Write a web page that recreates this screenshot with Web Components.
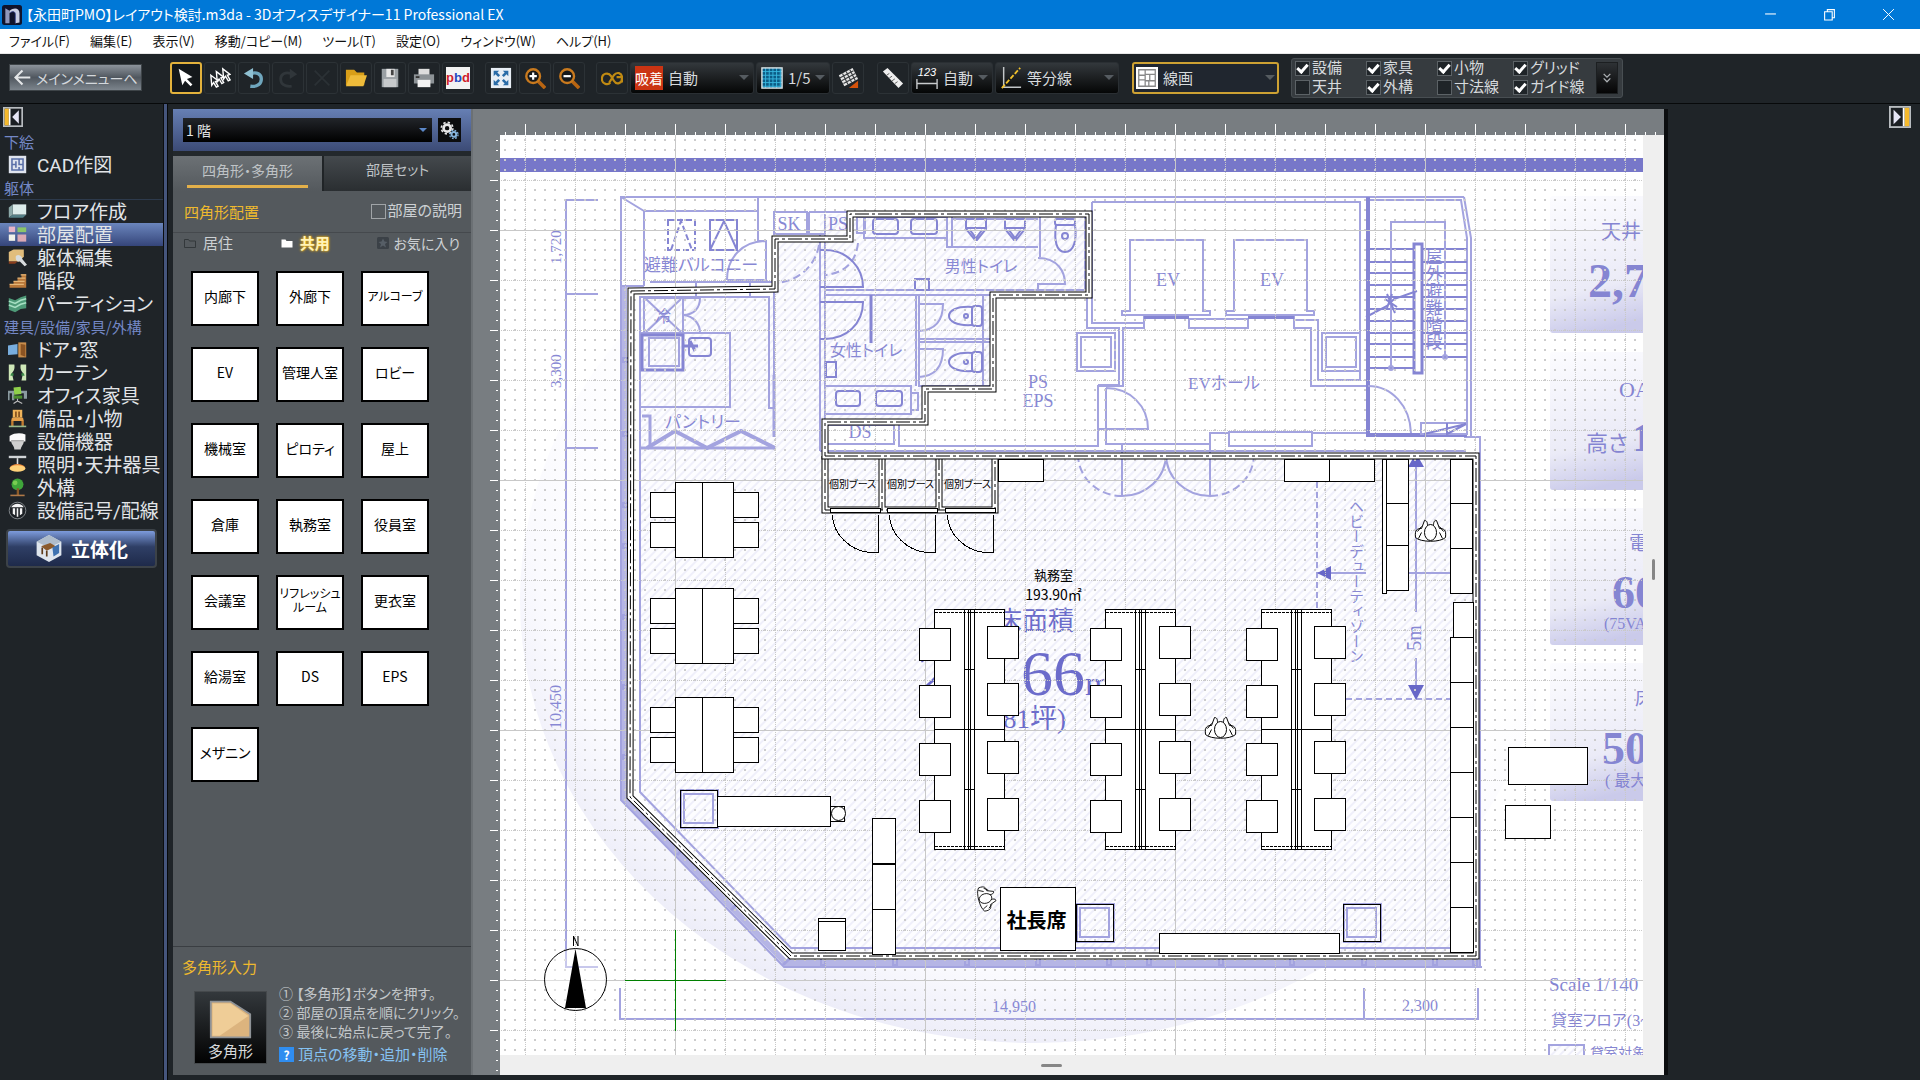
<!DOCTYPE html>
<html lang="ja">
<head>
<meta charset="utf-8">
<title>【永田町PMO】レイアウト検討.m3da - 3Dオフィスデザイナー11 Professional EX</title>
<style>
  html, body {
    margin: 0;
    height: 100%;
    overflow: hidden;
  }

  body {
    background: #1f2428;
    font-family: "Noto Sans CJK JP", sans-serif;
    font-feature-settings: "palt";
    font-size: 15px;
  }
</style>
</head>
<body>
<office-app></office-app>

<script>
const ICONS = {
  logo: `<rect width="24" height="24" rx="3" fill="#10142c"/><path d="M4 22V4l5 3v15z" fill="#8f97bc"/><path d="M9 7c6-5 12-3 12 3v11l-5 1V11c0-4-4-4-7-1z" fill="#c9cee2"/><path d="M10 9c3-2 6-1 6 2v11" fill="none" stroke="#3f4c98"/>`,
  cursor: `<path d="M4 2l15 9-6 2 6 6-2 2-6-6-3 5z" fill="#fff"/>`,
  multi: `<g fill="#1f2428" stroke="#fff" stroke-width="1.5"><path d="M15 2l8 6-3 1 3 5-2 1-3-5-2 3z"/><path d="M8 5l8 6-3 1 3 5-2 1-3-5-2 3z"/><path d="M2 9l8 6-3 1 3 5-2 1-3-5-2 3z"/></g>`,
  undo: `<path d="M8 21c8 1 12-3 12-8S15 5 9 7" fill="none" stroke="#6fa6bd" stroke-width="3.6"/><path d="M1 7l10-6v12z" fill="#8fc0d2"/>`,
  redo: `<path d="M16 21C8 22 4 18 4 13S9 5 15 7" fill="none" stroke="#30363a" stroke-width="3"/><path d="M22 8L14 2v11z" fill="#30363a"/>`,
  cross: `<path d="M4 4l16 16M20 4L4 20" stroke="#2b3135" stroke-width="2"/>`,
  open: `<path d="M1 3h9l3 3h8v14H1z" fill="#d89e18"/><path d="M1 21L6 9h18l-4 12z" fill="#eebb3a"/>`,
  save: `<path d="M3 2h18v20H3z" fill="#9aa0a4"/><path d="M8 2h9v9H8z" fill="#e8e8e8"/><path d="M13 3h3v6h-3z" fill="#444"/><path d="M5 13h14v9H5z" fill="#c6c9cb"/>`,
  print: `<path d="M6 2h12v7H6z" fill="#ddd"/><path d="M1 8h22v10H1z" fill="#8c9296"/><path d="M5 14h14v8H5z" fill="#f2f2f2"/><path d="M3 10h4v2H3z" fill="#333"/>`,
  fit: `<rect x="1" y="1" width="22" height="22" fill="#e8eef5"/><path d="M4 4h6L8 6l3 3-2 2-3-3-2 2zM20 4v6l-2-2-3 3-2-2 3-3-2-2zM4 20v-6l2 2 3-3 2 2-3 3 2 2zM20 20h-6l2-2-3-3 2-2 3 3 2-2z" fill="#2a6ca8"/>`,
  zoomIn: `<path d="M15 15l8 8" stroke="#b86512" stroke-width="4"/><circle cx="10" cy="10" r="7.5" fill="#16181a" stroke="#c97a1e" stroke-width="2.6"/><path d="M6 10h8M10 6v8" stroke="#fff" stroke-width="2.4"/>`,
  zoomOut: `<path d="M15 15l8 8" stroke="#b86512" stroke-width="4"/><circle cx="10" cy="10" r="7.5" fill="#16181a" stroke="#c97a1e" stroke-width="2.6"/><path d="M6 10h8" stroke="#fff" stroke-width="2.4"/>`,
  link: `<path d="M10 17c-2 3-9 2-9-4s7-8 10-3l3 5c3 5 9 3 9-3s-6-7-9-3l-5 8M17 11h6v6" fill="none" stroke="#c08a12" stroke-width="2.4"/>`,
  grid: `<rect x="1" y="1" width="22" height="22" fill="#0b5c86"/><path d="M1 5h22M1 9h22M1 13h22M1 17h22M1 21h22M5 1v22M9 1v22M13 1v22M17 1v22M21 1v22" stroke="#39b8e0"/><rect x="1" y="1" width="22" height="22" fill="none" stroke="#dfe8ea" stroke-width="1.5"/>`,
  tiltGrid: `<path d="M2 9L17 1l6 12-15 8z" fill="#e6e6e6"/><path d="M3 12l15-8M5 15l15-8M7 18l15-8M6 7l6 12M10 5l6 12M14 3l6 12" stroke="#3b3f42" stroke-width="1.3"/><path d="M13 23l10-8v8z" fill="#d5530c"/>`,
  ruler: `<path d="M1 5l5-4 17 17-5 5z" fill="#eee"/><path d="M5 9l3-2M8 12l3-2M11 15l3-2M14 18l3-2" stroke="#555"/>`,
  dims: `<path d="M1 13v11M23 13v11M1 18h22" stroke="#c9ccce" stroke-width="1.5"/><text x="2" y="10" font-family="Liberation Sans" font-style="italic" font-size="12" fill="#fff">123</text>`,
  divide: `<path d="M4 0v22h19" fill="none" stroke="#c2c6c8" stroke-width="1.6"/><path d="M2 23L22 1" stroke="#f1c12c" stroke-width="2" stroke-dasharray="5 2"/>`,
  linePlan: `<rect width="24" height="24" fill="#fff"/><path d="M3 3h18v18H3zM3 9h7V3M10 9v12M10 14h-7M10 8h11M15 8v7h6M15 15h-5M14 15v6" fill="none" stroke="#888" stroke-width="1.4"/>`,
  cad: `<rect x="1" y="1" width="22" height="22" fill="#dfe4ee"/><path d="M5 5h14v14H5zM5 12h5M10 8v8M14 5v7h5M14 15v4" fill="none" stroke="#5a6fa8" stroke-width="2"/>`,
  floor: `<path d="M6 3h17v13H6z" fill="#dcebea"/><path d="M1 7l5-4v13l-5 4z" fill="#8ca8a8"/><path d="M1 20l5-4h17l-4 4z" fill="#557f86"/>`,
  rooms: `<path d="M1 2h8v7H1z" fill="#e7b5c8"/><path d="M12 3h11v6H12z" fill="#8ac56a"/><path d="M1 12h8v8H1z" fill="#f2f2ea"/><path d="M12 12h11v9H12z" fill="#dba8b4"/>`,
  wrench: `<path d="M1 5l6-3h13v9l-6 6H1z" fill="#e1bd7c"/><path d="M1 17h11l-3 3H1z" fill="#8a3d1c"/><path d="M10 10a5 5 0 0 1 8 4l6 7-3 2-6-6c-4 1-6-3-5-7l4 3z" fill="#d8dcde"/>`,
  stairs: `<path d="M2 21v-4h5v-4h5V9h5V4h6v17z" fill="#b9783a"/><path d="M2 17h18M7 13h14M12 9h10M16 5h7" stroke="#e5b677" stroke-width="1.6"/>`,
  partition: `<path d="M1 5l8 3 7-4 7-2v16l-7 1-7 4-8-3z" fill="#4e9a78"/><path d="M1 9l8 3 7-4 7-2M1 14l8 3 7-4 7-2" fill="none" stroke="#a8e0c4" stroke-width="2"/>`,
  door: `<path d="M0 7l12-2v13L0 19z" fill="#79aede"/><path d="M13 3h10v19H13z" fill="#c98e4c"/><path d="M16 5l6 1v15l-6-2z" fill="#8b5423"/>`,
  curtain: `<path d="M1 2h7c1 6-1 8-3 11l2 9H1zM23 2h-7c-1 6 1 8 3 11l-2 9h6z" fill="#cfe8b8"/><path d="M4 13h3v3H3zM17 13h3l1 3h-4z" fill="#3b8a48"/>`,
  office: `<path d="M0 6h8v12H5v-9H2v9H0zM15 6h9v10h-4V9h-5z" fill="#8a9aa0"/><path d="M7 2l9-1 1 9-9 1z" fill="#8fd04a"/><path d="M7 12h11v4H7z" fill="#4d8f2f"/><path d="M12 16v4M7 22l5-3 6 3" stroke="#bbb" stroke-width="1.5" fill="none"/>`,
  chair: `<path d="M6 1h12v10H6z" fill="#f0b45a"/><path d="M9 3h2v7H9zM13 3h2v7h-2z" fill="#7d4a1a"/><path d="M5 11h14l1 4H4z" fill="#e6a04a"/><path d="M4 15h3v7H4zM17 15h3v7h-3z" fill="#c27c30"/><path d="M1 21h22v2H1z" fill="#98b98a"/>`,
  toilet: `<path d="M2 5c6-4 14-4 20-2v9H2z" fill="#fafafa"/><path d="M4 11h16c0 5-3 6-4 11H8c0-5-4-6-4-11z" fill="#cfcfcf"/><path d="M4 11h16" stroke="#888"/>`,
  lamp: `<path d="M1 1h22v3H1z" fill="#d0d4d6"/><path d="M12 4v8" stroke="#ddd" stroke-width="2"/><path d="M2 16c3-6 17-6 20 0z" fill="#ee8a3c"/><ellipse cx="12" cy="17" rx="10" ry="4" fill="#ffd27a"/>`,
  tree: `<circle cx="12" cy="8" r="7.5" fill="#3fa53a"/><circle cx="9" cy="6" r="3" fill="#79cc52"/><path d="M11 13h3v9h-3z" fill="#8a5a2a"/><path d="M3 21h18v2H3z" fill="#b07a48"/>`,
  plug: `<circle cx="12" cy="12" r="10.5" fill="#1c2024" stroke="#9a9ea2"/><path d="M4 8c3-6 13-6 16 0zM6 9h3v9l-3-2zM11 9h2v11h-2zM15 9h3v7l-3 2z" fill="#f4f4f4"/>`,
  cube: `<path d="M12 0l11 6v12l-11 6L1 18V6z" fill="#dfe6ee"/><path d="M12 0l11 6-11 5L1 6z" fill="#aebccb"/><path d="M5 10l8-3 5 3-8 4z" fill="#8b5a2b"/><path d="M6 11v6M10 14v5M17 11v4" stroke="#5f3c1b" stroke-width="1.5"/><path d="M15 11l6-3v8l-5 3z" fill="#3f72b0"/>`,
  gears: `<g fill="none"><circle cx="9" cy="9" r="4.5" stroke="#e8e8e8" stroke-width="3.4"/><circle cx="9" cy="9" r="7.3" stroke="#e8e8e8" stroke-width="2" stroke-dasharray="3 2.7"/><circle cx="17.5" cy="17" r="3" stroke="#86b4dc" stroke-width="2.6"/><circle cx="17.5" cy="17" r="5.3" stroke="#86b4dc" stroke-width="1.6" stroke-dasharray="2.2 2"/></g>`,
  folder: `<path d="M1 5h8l2 3h12v13H1z" fill="none" stroke="#33383b" stroke-width="2"/>`,
  folderOn: `<path d="M1 5h8l2 3h12v13H1z" fill="#fff"/>`,
  star: `<rect width="24" height="24" rx="3" fill="#3b4147"/><path d="M12 3l3 6 6 1-5 4 2 7-6-4-6 4 2-7-5-4 6-1z" fill="#565e66"/>`,
  polygon: `<path d="M1 2h11l11 7v13H1z" fill="#dcb47e" stroke="#8e9296"/><path d="M2 3h10l10 7L6 21H2z" fill="#efcd97"/>`,
  dockLeft: `<rect x="1" y="1" width="22" height="22" fill="#1b1f23" stroke="#b8bcc0" stroke-width="2"/><path d="M2 2h5v20H2z" fill="#f5b92c"/><path d="M7 2h2v20H7z" fill="#fff"/><path d="M19 4v16l-8-8z" fill="#e6e6f6"/>`,
  dockRight: `<rect x="1" y="1" width="22" height="22" fill="#1b1f23" stroke="#b8bcc0" stroke-width="2"/><path d="M17 2h5v20h-5z" fill="#f5b92c"/><path d="M15 2h2v20h-2z" fill="#fff"/><path d="M5 4v16l8-8z" fill="#e6e6f6"/>`,
  arrowLeft: `<path d="M23 12H3M12 2L2 12l10 10" fill="none" stroke="#e4e6e8" stroke-width="3"/>`,
  chevrons: `<path d="M4 2l8 8 8-8M4 13l8 8 8-8" fill="none" stroke="#aeb2b5" stroke-width="3"/>`,
  minimize: `<path d="M2 11h20" stroke="#fff" stroke-width="2"/>`,
  restore: `<path d="M3 7h14v15H3zM8 7V3h13v15h-4" fill="none" stroke="#fff" stroke-width="2"/>`,
  close: `<path d="M2 2l20 20M22 2L2 22" stroke="#fff" stroke-width="1.8"/>`
};

function define(name, html, setup) {
  const template = document.createElement("template");
  template.innerHTML = html;

  customElements.define(name, class extends HTMLElement {
    constructor() {
      super();
      this.attachShadow({ mode: "open" });
      this.shadowRoot.appendChild(template.content.cloneNode(true));
    }

    connectedCallback() {
      if (setup) setup(this, this.shadowRoot);
    }
  });
}

define("app-icon", `
  <style>
    :host { display: block; flex: none; width: 20px; height: 20px; }
    svg { display: block; width: 100%; height: 100%; }
  </style>
  <svg viewBox="0 0 24 24" aria-hidden="true"></svg>
`, (el, root) => {
  root.querySelector("svg").innerHTML = ICONS[el.getAttribute("name")];
});

define("title-bar", `
  <style>
    :host {
      display: flex;
      align-items: center;
      height: 29px;
      padding-left: 2px;
      background: #0078d7;
      color: #fff;
    }
    h1 { flex: 1; margin: 0 0 0 4px; font-size: 14px; font-weight: 400; line-height: 29px; }
    button {
      display: flex;
      align-items: center;
      justify-content: center;
      width: 59px;
      height: 29px;
      padding: 0 4px 0 0;
      border: 0;
      background: none;
    }
    button app-icon { width: 13px; height: 13px; }
  </style>
  <app-icon name="logo"></app-icon>
  <h1><slot></slot></h1>
  <button aria-label="最小化"><app-icon name="minimize"></app-icon></button>
  <button aria-label="元に戻す"><app-icon name="restore"></app-icon></button>
  <button aria-label="閉じる"><app-icon name="close"></app-icon></button>
`);

define("menu-bar", `
  <style>
    :host { display: block; background: #fff; border-bottom: 1px solid #e8e8e8; }
    nav { display: flex; gap: 20px; height: 24px; padding-left: 9px; }
    button {
      padding: 0;
      border: 0;
      background: none;
      color: #111;
      font: inherit;
      font-size: 13px;
      font-feature-settings: inherit;
      line-height: 24px;
    }
  </style>
  <nav></nav>
`, (el, root) => {
  root.querySelector("nav").innerHTML = el.getAttribute("items").split(",")
    .map(t => `<button>${t}</button>`).join("");
});

define("tool-button", `
  <style>
    :host { display: block; }
    button {
      display: flex;
      align-items: center;
      justify-content: center;
      box-sizing: border-box;
      width: 32px;
      height: 32px;
      padding: 0;
      border: 1px solid #2c3236;
      border-radius: 3px;
      background: #1f2428;
      font: bold 13px "Liberation Sans", sans-serif;
    }
    app-icon { width: 22px; height: 22px; }
    :host([active]) button { border: 2px solid #e3b23c; background: #14181b; }
  </style>
  <button><slot></slot></button>
`, (el, root) => {
  root.querySelector("button").setAttribute("aria-label", el.getAttribute("label"));
  const icon = el.getAttribute("icon");
  if (icon) root.querySelector("button").innerHTML = `<app-icon name="${icon}"></app-icon>`;
});

define("tool-select", `
  <style>
    :host { display: block; width: var(--w); }
    label {
      display: flex;
      align-items: center;
      box-sizing: border-box;
      height: 32px;
      padding: 0 4px;
      border: 1px solid #2a2f33;
      border-radius: 3px;
      background: linear-gradient(#33383c, #050606);
    }
    select {
      appearance: none;
      flex: 1;
      min-width: 0;
      height: 28px;
      padding: 0 0 0 5px;
      border: 0;
      background: none;
      color: #d6dadd;
      font: inherit;
      font-size: 15px;
    }
    i { border: 5px solid transparent; border-top-color: #555b60; border-bottom: 0; }
    app-icon { width: 22px; height: 24px; }
    ::slotted(b) { background: #cb3413; color: #fff; font-size: 14px; font-weight: 400; line-height: 24px; }
    :host([active]) label { padding: 0 2px; border: 2px solid #cda133; background: #20262f; }
  </style>
  <label><slot></slot><select></select><i></i></label>
`, (el, root) => {
  const icon = el.getAttribute("icon");
  if (icon) root.querySelector("slot").innerHTML = `<app-icon name="${icon}"></app-icon>`;
  const select = root.querySelector("select");
  select.innerHTML = `<option>${el.getAttribute("value")}</option>`;
  select.setAttribute("aria-label", el.getAttribute("label"));
});

define("check-item", `
  <style>
    :host { display: block; }
    label { display: flex; align-items: center; gap: 2px; font-family: Roboto, "Noto Sans CJK JP", sans-serif; line-height: 19px; white-space: nowrap; }
    input {
      appearance: none;
      flex: none;
      display: grid;
      place-items: center;
      box-sizing: border-box;
      width: 15px;
      height: 15px;
      margin: 0;
      border: 1px solid var(--check-border, #5c6266);
      background: var(--check-back, #1f2428);
    }
    input:checked::after {
      content: "";
      width: 4px;
      height: 8px;
      margin-bottom: 3px;
      border: solid #fff;
      border-width: 0 3px 3px 0;
      transform: rotate(42deg);
    }
  </style>
  <label><input type="checkbox"><slot></slot></label>
`, (el, root) => {
  root.querySelector("input").checked = el.hasAttribute("checked");
});

define("tool-bar", `
  <style>
    :host {
      display: flex;
      align-items: center;
      gap: 2px;
      box-sizing: border-box;
      height: 50px;
      padding: 0 9px 2px;
      border-bottom: 1px solid #07090a;
      background: #1f2428;
      color: #d6dadd;
    }
    .home {
      display: flex;
      align-items: center;
      gap: 5px;
      width: 133px;
      height: 27px;
      margin-right: 26px;
      padding: 0 4px;
      border: 1px solid #3e4448;
      background: linear-gradient(#8d949c, #50575f 50%, #7c848c);
      color: #d4d8dc;
      font: inherit;
      font-size: 14px;
      font-feature-settings: inherit;
      white-space: nowrap;
    }
    .home app-icon { width: 17px; height: 17px; }
    .gap { width: 9px; }
    .gap.s { width: 7px; }
    .pbd { padding: 3px 0 4px; background: #f3f3f3; color: #2448c0; line-height: 15px; }
    .pbd span { color: #d0202c; }
    .layers {
      display: flex;
      align-items: center;
      gap: 8px;
      height: 38px;
      margin-left: 10px;
      padding: 0 4px 0 3px;
      border: 1px solid #484e52;
      border-radius: 3px;
      background: #363b3f;
    }
    .checks { display: grid; grid-template-columns: 71px 71px 76px 75px; }
    .layers button {
      display: grid;
      place-items: center;
      width: 22px;
      height: 32px;
      padding: 0;
      border: 1px solid #1c1f21;
      background: linear-gradient(#2e3235, #050505);
    }
    .layers button app-icon { width: 10px; height: 14px; }
  </style>
  <button class="home"><app-icon name="arrowLeft"></app-icon>メインメニューへ</button>
  <tool-button icon="cursor" label="選択" active></tool-button>
  <tool-button icon="multi" label="複数選択"></tool-button>
  <tool-button icon="undo" label="元に戻す"></tool-button>
  <tool-button icon="redo" label="やり直し"></tool-button>
  <tool-button icon="cross" label="削除"></tool-button>
  <tool-button icon="open" label="開く"></tool-button>
  <tool-button icon="save" label="保存"></tool-button>
  <tool-button icon="print" label="印刷"></tool-button>
  <tool-button label="pbd"><div class="pbd"><span>p</span>b<span>d</span></div></tool-button>
  <div class="gap s"></div>
  <tool-button icon="fit" label="全体表示"></tool-button>
  <tool-button icon="zoomIn" label="拡大"></tool-button>
  <tool-button icon="zoomOut" label="縮小"></tool-button>
  <div class="gap s"></div>
  <tool-button icon="link" label="連動"></tool-button>
  <tool-select style="--w: 124px" value="自動" label="吸着"><b>吸着</b></tool-select>
  <tool-select style="--w: 74px" icon="grid" value="1/5" label="グリッド"></tool-select>
  <tool-button icon="tiltGrid" label="グリッド傾き"></tool-button>
  <div class="gap"></div>
  <tool-button icon="ruler" label="計測"></tool-button>
  <tool-select style="--w: 82px" icon="dims" value="自動" label="寸法"></tool-select>
  <tool-select style="--w: 124px" icon="divide" value="等分線" label="補助線"></tool-select>
  <div class="gap"></div>
  <tool-select style="--w: 147px" icon="linePlan" value="線画" label="表示方法" active></tool-select>
  <div class="layers">
    <div class="checks">
      <check-item checked>設備</check-item>
      <check-item checked>家具</check-item>
      <check-item checked>小物</check-item>
      <check-item checked>グリッド</check-item>
      <check-item>天井</check-item>
      <check-item checked>外構</check-item>
      <check-item>寸法線</check-item>
      <check-item checked>ガイド線</check-item>
    </div>
    <button aria-label="詳細"><app-icon name="chevrons"></app-icon></button>
  </div>
`);

define("nav-item", `
  <style>
    :host { display: block; }
    a {
      display: flex;
      align-items: center;
      gap: 10px;
      height: 23px;
      padding-left: 8px;
      color: #e2e5e8;
      font-family: Roboto, "Noto Sans CJK JP", sans-serif;
      font-size: 19px;
      line-height: 21px;
      text-decoration: none;
      white-space: nowrap;
    }
    span { padding-top: 2px; }
    app-icon { width: 19px; height: 19px; }
    :host([current]) a { background: linear-gradient(#6b86bd, #35457a); }
  </style>
  <a href="#"><app-icon></app-icon><span><slot></slot></span></a>
`, (el, root) => {
  const icon = document.createElement("app-icon");
  icon.setAttribute("name", el.getAttribute("icon"));
  root.querySelector("app-icon").replaceWith(icon);
});

define("side-nav", `
  <style>
    :host {
      display: block;
      box-sizing: border-box;
      flex: none;
      width: 164px;
      border-right: 1px solid #0c0e10;
    }
    .dock { display: block; padding: 3px; border: 0; background: none; }
    h2 {
      margin: 0;
      height: 23px;
      padding-left: 4px;
      color: #7488c6;
      font-size: 15px;
      font-weight: 400;
      line-height: 23px;
    }
    hr { height: 1px; margin: 0; border: 0; background: #2d3a4c; }
    .solid {
      display: flex;
      align-items: center;
      justify-content: center;
      gap: 8px;
      width: 151px;
      height: 39px;
      margin: 7px 6px;
      border: 2px solid #3c4248;
      border-radius: 4px;
      background: linear-gradient(#7d9bdc, #2f3f66 45%, #1e2a4a);
      color: #fff;
      font: bold 19px "Noto Sans CJK JP", sans-serif;
    }
    .solid app-icon { width: 28px; height: 27px; }
  </style>
  <button class="dock" aria-label="たたむ"><app-icon name="dockLeft"></app-icon></button>
  <h2>下絵</h2>
  <nav-item icon="cad">CAD作図</nav-item>
  <h2>躯体</h2>
  <hr>
  <nav-item icon="floor">フロア作成</nav-item>
  <nav-item icon="rooms" current>部屋配置</nav-item>
  <nav-item icon="wrench">躯体編集</nav-item>
  <nav-item icon="stairs">階段</nav-item>
  <nav-item icon="partition">パーティション</nav-item>
  <h2>建具/設備/家具/外構</h2>
  <nav-item icon="door">ドア・窓</nav-item>
  <nav-item icon="curtain">カーテン</nav-item>
  <nav-item icon="office">オフィス家具</nav-item>
  <nav-item icon="chair">備品・小物</nav-item>
  <nav-item icon="toilet">設備機器</nav-item>
  <nav-item icon="lamp">照明・天井器具</nav-item>
  <nav-item icon="tree">外構</nav-item>
  <nav-item icon="plug">設備記号/配線</nav-item>
  <button class="solid"><app-icon name="cube"></app-icon>立体化</button>
`);

define("room-tile", `
  <style>
    :host { display: block; }
    button {
      display: block;
      box-sizing: border-box;
      width: 68px;
      height: 55px;
      padding: 0 0 6px;
      border: 2px solid #000;
      background: #fff;
      color: #000;
      font: inherit;
      font-size: 14px;
      font-feature-settings: inherit;
      line-height: 20px;
      white-space: nowrap;
    }
    :host([small]) button { padding-bottom: 4px; font-family: Roboto, "Noto Sans CJK JP", sans-serif; font-size: 12px; line-height: 14px; }
  </style>
  <button><slot></slot></button>
`);

define("room-panel", `
  <style>
    :host {
      display: flex;
      flex-direction: column;
      flex: none;
      box-sizing: border-box;
      width: 300px;
      border-right: 2px solid #6b7074;
      background: #54595d;
      color: #ccd0d3;
    }
    .floor {
      display: flex;
      gap: 6px;
      height: 24px;
      padding: 9px 10px;
      border-bottom: 5px solid #23282c;
      background: linear-gradient(#667fb4, #3c4b76);
    }
    .floor label { display: flex; align-items: center; flex: 1; padding-right: 5px; background: linear-gradient(#22252a, #000); }
    select { appearance: none; flex: 1; padding: 0 3px; border: 0; background: none; color: #e4e6e8; font: inherit; font-size: 14px; line-height: 20px; }
    .floor i { border: 4px solid transparent; border-top-color: #5b87c8; border-bottom: 0; }
    .floor button { width: 23px; height: 24px; padding: 2px; border: 0; background: #0c0d0e; }
    .floor button app-icon { width: 19px; height: 19px; }
    .tabs { display: grid; grid-template-columns: 1fr 1fr; height: 35px; }
    .tabs button {
      border: 0;
      border-left: 2px solid #202427;
      background: linear-gradient(#44494d, #2a2e31);
      color: #bfc3c6;
      font: inherit;
      font-size: 14px;
      font-feature-settings: inherit;
      padding: 0 0 6px;
    }
    .tabs button[aria-selected=true] { border: 0; background: linear-gradient(#6c7175, #54595d); padding: 0 14px; }
    .tabs span { display: block; padding-bottom: 4px; line-height: 22px; }
    .tabs [aria-selected=true] span { border-bottom: 3px solid #e3b04a; }
    .head { display: flex; justify-content: space-between; align-items: center; height: 41px; padding: 0 9px 0 11px; border-bottom: 1px solid #45494d; }
    h2 { margin: 0; color: #efb92e; font-size: 15px; font-weight: 400; line-height: 20px; }
    .head check-item { --check-back: #54595d; --check-border: #a0a4a7; }
    .kinds { display: flex; justify-content: space-between; align-items: center; height: 20px; padding: 0 11px; font-size: 15px; line-height: 20px; }
    .kinds a { display: flex; align-items: center; gap: 7px; color: inherit; text-decoration: none; }
    .kinds app-icon { width: 12px; height: 12px; }
    .kinds .on { color: #fff3b8; font-weight: 700; text-shadow: 0 0 2px #efb010, 0 0 3px #efb010; }
    .kinds .fav { gap: 4px; font-size: 14px; }
    .tiles { display: grid; grid-template-columns: repeat(3, 68px); gap: 21px 17px; padding: 18px; }
    .input { margin-top: auto; border-top: 1px solid #3a3e42; padding: 10px 0 11px; }
    .input h2 { padding: 0 9px 7px; }
    .poly { display: flex; align-items: end; gap: 12px; padding: 0 8px 0 21px; }
    .poly button {
      display: flex;
      flex-direction: column;
      align-items: center;
      justify-content: end;
      flex: none;
      box-sizing: border-box;
      width: 73px;
      height: 73px;
      padding: 0 0 2px;
      border: 1px solid #45494c;
      background: linear-gradient(#33383c, #020202);
      color: #d6d9db;
      font: inherit;
      font-size: 15px;
      line-height: 20px;
    }
    .poly button app-icon { width: 47px; height: 43px; }
    ol { margin: 0; padding: 1px 0 0; list-style: none; color: #c3c7ca; font-family: Roboto, "Noto Sans CJK JP", sans-serif; font-size: 14px; line-height: 19px; white-space: nowrap; }
    .help { display: flex; gap: 4px; align-items: center; margin-top: 2px; line-height: 20px; }
    .help b { width: 15px; height: 15px; background: #2f8df0; color: #fff; font-size: 12px; line-height: 15px; text-align: center; }
    .help a { color: #86c2f2; text-decoration: none; }
  </style>
  <div class="floor">
    <label><select aria-label="階"><option>1 階</option></select><i></i></label>
    <button aria-label="階の設定"><app-icon name="gears"></app-icon></button>
  </div>
  <div class="tabs" role="tablist">
    <button role="tab" aria-selected="true"><span>四角形・多角形</span></button>
    <button role="tab" aria-selected="false"><span>部屋セット</span></button>
  </div>
  <div class="head"><h2>四角形配置</h2><check-item>部屋の説明</check-item></div>
  <div class="kinds">
    <a href="#"><app-icon name="folder"></app-icon>居住</a>
    <a href="#" class="on"><app-icon name="folderOn"></app-icon>共用</a>
    <a href="#" class="fav"><app-icon name="star"></app-icon>お気に入り</a>
  </div>
  <div class="tiles">
    <room-tile>内廊下</room-tile>
    <room-tile>外廊下</room-tile>
    <room-tile small>アルコーブ</room-tile>
    <room-tile>EV</room-tile>
    <room-tile>管理人室</room-tile>
    <room-tile>ロビー</room-tile>
    <room-tile>機械室</room-tile>
    <room-tile>ピロティ</room-tile>
    <room-tile>屋上</room-tile>
    <room-tile>倉庫</room-tile>
    <room-tile>執務室</room-tile>
    <room-tile>役員室</room-tile>
    <room-tile>会議室</room-tile>
    <room-tile small>リフレッシュ<br>ルーム</room-tile>
    <room-tile>更衣室</room-tile>
    <room-tile>給湯室</room-tile>
    <room-tile>DS</room-tile>
    <room-tile>EPS</room-tile>
    <room-tile>メザニン</room-tile>
  </div>
  <div class="input">
    <h2>多角形入力</h2>
    <div class="poly">
      <button><app-icon name="polygon"></app-icon>多角形</button>
      <div>
        <ol>
          <li>① 【多角形】ボタンを押す。</li>
          <li>② 部屋の頂点を順にクリック。</li>
          <li>③ 最後に始点に戻って完了。</li>
        </ol>
        <div class="help"><b>?</b><a href="#">頂点の移動・追加・削除</a></div>
      </div>
    </div>
  </div>
`);

// plan helpers: all return SVG markup in plan coordinates
const rect = (x, y, x2, y2, extra = "") =>
  `<rect x="${x}" y="${y}" width="${x2 - x}" height="${y2 - y}" ${extra}/>`;
const path = (d, extra = "") => `<path d="${d}" ${extra}/>`;
const text = (x, y, size, str, extra = "") =>
  `<text x="${x}" y="${y}" font-size="${size}" ${extra}>${str}</text>`;

function wall(d) {
  return path(d, `stroke="#000" stroke-width="7"`) +
    path(d, `stroke="#fff" stroke-width="5"`) +
    path(d, `stroke="#000" stroke-width="1" stroke-dasharray="14 3 3 3"`);
}

function underlay() {
  const out = [];

  // sheet background
  out.push(`<ellipse cx="1035" cy="600" rx="515" ry="443" fill="url(#halo)" stroke="none"/>`);
  out.push(path("M621 196H1464L1480 437V966H786L621 800Z", `fill="#fff" stroke="none"`));
  out.push(path("M500 165H1643", `stroke="#7777c9" stroke-width="14"`));
  for (const [y, y2] of [[196, 333], [352, 490], [508, 645], [663, 801]]) {
    out.push(rect(1550, y, 1700, y2, `rx="3" fill="url(#card)" stroke="none"`));
  }

  // leased area
  out.push(path("M640 296H773V240H820V214H1087V294H990V388H924V420H825V455H1475V955H791L640 796Z", `fill="url(#hatch)" stroke="none"`));

  // perimeter
  out.push(path("M624 286V798L786 963H1479", `stroke="#b5b5e5" stroke-width="6"`));
  out.push(path("M621 286V800L784 967H1482M1480 966V437H1464M640 296V792L791 948H1450"));
  for (const y of [360, 434, 505, 546, 617, 687, 757]) out.push(rect(623, y - 2, 631, y + 2));
  for (const x of [823, 895, 967, 1038, 1109, 1149, 1221, 1292, 1364, 1435, 1475]) out.push(rect(x - 2, 957, x + 2, 965));
  for (const [x, y] of [[680, 852], [734, 907], [786, 962]]) out.push(path(`M${x - 3} ${y + 3}l7 -7`, `stroke-width="3"`));

  // dimensions
  out.push(path("M598 200H566V967H598M566 294H598M566 448H598M620 988V1019H1478V988M1364 988V1019"));
  out.push(text(0, 0, 15, "1,720", `transform="translate(561 247) rotate(-90)"`));
  out.push(text(0, 0, 15, "3,300", `transform="translate(561 371) rotate(-90)"`));
  out.push(text(0, 0, 16, "10,450", `transform="translate(561 707) rotate(-90)"`));
  out.push(text(1014, 1012, 16, "14,950"));
  out.push(text(1420, 1011, 16, "2,300"));

  // balcony
  out.push(path("M621 286V197H1464M621 197L644 211V286M644 211H758M758 197V241H766V280H727M727 280C727 258 742 241 766 241M621 286H644M650 282H773M696 282V296M750 282V296"));
  out.push(rect(668, 220, 695, 250, `class="dark" stroke-dasharray="6 3"`) + path("M671 250L681 221L692 250", `class="dark" stroke-dasharray="6 3"`));
  out.push(rect(710, 220, 737, 250, `class="dark"`) + path("M710 250L724 221L737 250", `class="dark"`));
  out.push(text(701, 271, 17, "避難バルコニー"));

  // shafts and corridor
  out.push(rect(774, 212, 807, 234) + path("M809 212H850M809 212V234H824M820 234V451M774 240V437M825 214V420"));
  out.push(text(789, 230, 18, "SK") + text(838, 230, 18, "PS") + text(860, 438, 18, "DS"));
  out.push(path("M819 245C815 268 796 282 775 283M858 243C856 262 845 273 825 275", `stroke-dasharray="8 4"`));
  out.push(path("M774 375V437", `stroke-width="3"`));

  // men's room
  out.push(rect(864, 217, 947, 238) + rect(873, 219, 898, 234, `rx="3" class="dark"`) + rect(911, 219, 937, 234, `rx="3" class="dark"`));
  out.push(rect(857, 217, 865, 233) + path("M952 214V247H1038M947 214V247H952M1040 214V257M1085 214V290H825M825 295H1085M953 219H1038"));
  for (const x of [976, 1015]) {
    out.push(path(`M${x - 10} 219h20v10l-9 11h-2l-9 -11zM${x - 9} 228h18M${x - 6} 230l6 8l6 -8`, `class="dark"`));
  }
  out.push(rect(1055, 219, 1075, 225, `rx="2" class="dark"`) + path("M1056 225C1054 240 1056 252 1065 252S1077 240 1075 225", `class="dark"`) + `<circle class="dark" cx="1065" cy="236" r="3"/>`);
  out.push(path("M1038 258C1058 258 1065 272 1065 284H1038V290") + rect(915, 279, 929, 290, `class="dark"`));
  out.push(path("M825 250C848 250 863 268 863 287H820M820 250H825", `class="dark"`));
  out.push(text(981, 272, 16, "男性トイレ"));

  // women's room
  out.push(path("M820 302H863C863 324 846 339 825 339H820", `class="dark"`));
  out.push(path("M916 295V386M919 295V386H990M983 295V386M919 339H990M919 342H990M919 304H943C943 320 936 330 919 331M919 349H943C943 366 936 376 919 377"));
  out.push(path("M871 295V343", `class="dark" stroke-width="3"`));
  for (const y of [316, 362]) {
    out.push(rect(972, y - 10, 982, y + 10, `rx="3" class="dark"`) + path(`M972 ${y - 9}C956 ${y - 10} 949 ${y - 5} 949 ${y}S956 ${y + 10} 972 ${y + 9}`, `class="dark"`) + `<circle class="dark" cx="966" cy="${y}" r="2"/>`);
  }
  out.push(rect(825, 386, 911, 414) + rect(836, 391, 860, 406, `rx="3" class="dark"`) + rect(876, 391, 902, 406, `rx="3" class="dark"`) + rect(911, 393, 918, 410));
  out.push(rect(826, 362, 836, 377, `class="dark"`) + text(866, 356, 16, "女性トイレ"));
  out.push(rect(825, 425, 894, 444));

  // pantry
  out.push(path("M640 297H769V408H774M640 333H730V407H640"));
  out.push(rect(644, 298, 683, 333) + path("M646 299L681 332M681 299L646 332M683 298H700C700 308 694 315 683 315C694 316 700 324 700 333H683"));
  out.push(text(663, 322, 16, "冷") + rect(642, 335, 683, 370, `class="dark" stroke-width="3"`) + rect(649, 338, 679, 366));
  out.push(rect(689, 338, 711, 356, `rx="3" class="dark"`) + path("M684 346h14M690 341l5 10", `class="dark" stroke-width="3"`));
  out.push(path("M647 448L675 431L707 448L741 431L775 448", `stroke-width="4"`) + path("M640 448H775M642 416H650V445", `stroke-width="3"`) + text(703, 428, 17, "パントリー"));

  // shafts and lift lobby
  out.push(text(1038, 388, 18, "PS") + text(1038, 407, 18, "EPS"));
  out.push(path("M899 422V446H1098V385M1098 385H1119V328H1087V295M1092 202V323H1144V316M1092 202H1360V380H1318V320H1294V328H1311V386H1367M1098 386H1123V328H1144V323M1189 319V328H1248V319H1189M1294 316V328"));
  out.push(path("M1144 317H1189M1248 317H1294", `class="dark" stroke-width="4"`));
  for (const x of [1130, 1234]) {
    out.push(path(`M${x} 311V240h73V311h7v4H${x - 8}v-4z`) + text(x + 38, 286, 18, "EV"));
  }
  out.push(rect(1077, 333, 1115, 371) + rect(1081, 337, 1111, 367) + rect(1322, 333, 1360, 371) + rect(1326, 337, 1356, 367));
  out.push(text(1224, 389, 17, "EVホール"));
  out.push(path("M1106 388C1130 388 1148 406 1148 429H1098M1098 386V446M1106 388V444H1210V433H1367M820 451H1466M1122 444V496M1210 444V496"));
  out.push(rect(1229, 432, 1312, 446, `fill="#fff"`));
  out.push(path("M1122 496C1146 496 1166 478 1166 454C1166 478 1186 496 1210 496"));
  out.push(path("M1078 454C1078 478 1098 496 1122 496M1210 496C1234 496 1254 478 1254 454", `stroke-dasharray="8 4"`));

  // outside stairs
  out.push(path("M1368 197V435H1467", `class="dark" stroke-width="4"`));
  out.push(path("M1464 197L1471 238V436M1370 200H1461L1467 238V434"));
  [249, 262, 273, 285, 297, 309, 321, 333, 344, 357, 368].forEach((y, i) => {
    out.push(path(`M1369 ${y}H1414` + (i < 10 ? `M1422 ${y}H1467` : ""), `class="dark"`));
  });
  out.push(path("M1391 368V222H1445V357") + rect(1414, 244, 1422, 373, `fill="#fff" class="dark" stroke-width="3"`));
  out.push(`<circle cx="1391" cy="368" r="2" fill="#8f8fd8"/><circle cx="1445" cy="357" r="2" fill="#8f8fd8"/>`);
  out.push(path("M1366 317L1387 306L1394 299L1417 291M1387 294L1395 313M1385 299L1397 307M1392 294L1387 308", `class="dark"`));
  out.push(text(1432, 248, 17, "屋外避難階段", `style="writing-mode: vertical-rl; text-anchor: start"`));
  out.push(path("M1368 386C1392 386 1410 406 1411 433") + rect(1421, 423, 1467, 434) + path("M1424 434L1466 424M1447 423V434L1466 424", `class="dark"`));

  // heavy duty zone
  out.push(path("M1317 482V609M1346 699H1450", `stroke-dasharray="6 4"`));
  out.push(path("M1317 573H1366M1408 573H1450M1416 466V612M1416 658V690"));
  out.push(path("M1317 573l14 -7v14zM1416 453l-8 14h16zM1416 700l-8 -15h16z", `fill="#6868c8" stroke="none"`));
  out.push(text(1355, 499, 15, "ヘビーデューティゾーン", `style="writing-mode: vertical-rl; text-anchor: start"`));
  out.push(text(0, 0, 20, "5m", `transform="translate(1421 638) rotate(-90)"`));

  // columns
  for (const [x, y] of [[680, 790], [1076, 904], [1343, 904]]) {
    out.push(rect(x + 1, y, x + 38, y + 38, `stroke-width="2"`) + rect(x + 4, y + 4, x + 33, y + 33));
  }

  // captions
  out.push(`<g fill="#6c6ccb">`
    + text(996, 630, 26, "床面積")
    + text(917, 695, 64, "2")
    + text(1021, 695, 64, "66")
    + text(1085, 695, 34, "m")
    + text(1003, 728, 27, "81坪)")
    + `</g><g fill="#8585d2">`
    + text(1601, 239, 20, "天井")
    + text(1588, 297, 48, "2,7", `font-weight="700"`)
    + text(1619, 397, 22, "OA")
    + text(1586, 451, 22, "高さ")
    + text(1632, 451, 40, "1", `font-weight="700"`)
    + text(1629, 550, 19, "電")
    + text(1612, 608, 46, "60", `font-weight="700"`)
    + text(1604, 629, 16, "(75VA")
    + text(1635, 705, 19, "床")
    + text(1602, 764, 46, "50", `font-weight="700"`)
    + text(1605, 786, 16, "( 最大")
    + text(1549, 991, 19, "Scale 1/140")
    + text(1551, 1026, 16, "貸室フロア(3~")
    + text(1590, 1058, 14, "貸室対象")
    + `</g>` + rect(1549, 1045, 1584, 1062, `fill="url(#hatch)"`));

  return out.join("");
}

function person(x, y, turn = 0) {
  return `<g transform="translate(${x} ${y}) rotate(${turn})" stroke-width="1" shape-rendering="auto">
    <path d="M-15 5c-1 -8 2 -9 6 -9l3 -8c3 0 3 3 3 6h6c0 -3 0 -6 3 -6l3 8c4 0 7 1 6 9c-5 5 -25 5 -30 0z"/>
    <path d="M-13 -1l4 -5M13 -1l-4 -5M-12 6l3 -6M12 6l-3 -6" fill="none"/>
    <ellipse rx="6" ry="8"/>
  </g>`;
}

function deskRow([x, right]) {
  const out = [rect(x, 609, x + 70, 849)];
  out.push(path(`M${x} 729h70M${x + 30} 609v240M${x + 34} 609v240M${x + 36} 609v240M${x + 40} 609v240M${x + 30} 669h10M${x + 30} 789h10`));
  out.push(path(`M${x} 612h70M${x} 846h70`, `stroke-dasharray="3 1"`));
  for (const y of [628, 685, 743, 800]) {
    out.push(rect(x - 15, y, x + 16, y + 32));
    out.push(rect(right, y - 2, right + 31, y + 30));
  }
  return out.join("");
}

function meetingTable(y) {
  return rect(675, y, 733, y + 75) + path(`M702 ${y}v75`)
    + [10, 40].map(d => rect(650, y + d, 675, y + d + 25) + rect(733, y + d, 758, y + d + 25)).join("");
}

function furniture() {
  const out = [482, 588, 697].map(meetingTable);
  out.push(...[[934, 987], [1105, 1159], [1261, 1314]].map(deskRow));

  // booth doors
  for (const x of [832, 889, 947]) {
    out.push(path(`M${x} 514C${x} 534 ${x + 18} 550 ${x + 37} 552H${x + 46}V514`, `fill="none"`));
    out.push(rect(x - 2, 508, x + 48, 512));
  }
  for (const x of [852, 910, 967]) {
    out.push(text(x, 487, 10, "個別ブース", `class="label"`));
  }

  // cabinets
  out.push(rect(998, 459, 1043, 481) + rect(1284, 459, 1329, 481) + rect(1329, 459, 1374, 481));
  out.push(rect(1382, 459, 1386, 593) + rect(1386, 459, 1408, 503) + rect(1386, 503, 1408, 545) + rect(1386, 545, 1408, 590));
  out.push(rect(1450, 459, 1472, 503) + rect(1450, 503, 1472, 548) + rect(1450, 548, 1472, 593) + rect(1453, 602, 1473, 637));
  for (let y = 637; y < 950; y += 45) out.push(rect(1450, y, 1473, y + 45));
  out.push(rect(872, 818, 895, 863) + rect(872, 864, 895, 909) + rect(872, 909, 895, 954));
  out.push(rect(818, 918, 845, 950) + path("M818 921h27"));

  // sofas, tables
  out.push(rect(717, 796, 830, 826) + rect(830, 806, 844, 821) + `<circle cx="838" cy="813" r="7" shape-rendering="auto"/>`);
  out.push(rect(1159, 933, 1339, 953) + rect(1508, 747, 1587, 784) + rect(1505, 805, 1550, 838));
  out.push(rect(1000, 887, 1075, 950) + text(1036, 927, 20, "社長席", `class="label" font-weight="700"`));
  for (const [x, y] of [[680, 790], [1076, 904], [1343, 904]]) out.push(rect(x, y, x + 37, y + 37, `fill="none"`));

  out.push(person(1430, 532) + person(1220, 729) + `<g transform="translate(985 898) scale(.8)">${person(0, 0, 75)}</g>`);
  out.push(text(1053, 579, 13, "執務室", `class="label"`) + text(1053, 599, 14, "193.90㎡", `class="label"`));
  return out.join("");
}

define("plan-view", `
  <style>
    :host { display: block; min-width: 0; overflow: hidden; background: #fff; }
    svg { display: block; width: 100%; height: 100%; }
    .under { fill: none; stroke: #a3a3df; stroke-width: 2; font-family: "Liberation Serif", "Noto Sans CJK JP", serif; }
    .under .dark { stroke: #8585d3; }
    .under text { stroke: none; text-anchor: middle; }
    .under > text { fill: #8888d4; }
    .under g text { text-anchor: start; }
    .walls { fill: none; }
    .items { fill: #fff; stroke: #000; shape-rendering: crispEdges; }
    .items .label { fill: #000; stroke: none; text-anchor: middle; font-family: "Noto Sans CJK JP", sans-serif; }
  </style>
  <svg role="img" aria-label="平面図">
    <defs>
      <radialGradient id="halo" cx=".56" cy=".38" r=".64">
        <stop offset=".72" stop-color="#fff"/>
        <stop offset=".86" stop-color="#fafafe"/>
        <stop offset="1" stop-color="#ececf8"/>
      </radialGradient>
      <linearGradient id="card" x1="0" y1="0" x2=".25" y2="1">
        <stop offset="0" stop-color="#fcfcff"/>
        <stop offset=".7" stop-color="#ebebf7"/>
        <stop offset="1" stop-color="#cacaea"/>
      </linearGradient>
      <pattern id="hatch" width="6" height="6" patternUnits="userSpaceOnUse" patternTransform="rotate(45)">
        <rect width="6" height="6" fill="#fdfdff"/>
        <rect width="2" height="6" fill="#efeffa"/>
      </pattern>
      <pattern id="dots" x="504" y="139" width="10" height="10" patternUnits="userSpaceOnUse">
        <rect width="2" height="2" fill="#ccc"/>
      </pattern>
      <pattern id="fine" x="525" y="180" width="50" height="50" patternUnits="userSpaceOnUse">
        <path d="M0 .5H50M.5 0V50" stroke="#c8c8c8" stroke-dasharray="1 1"/>
      </pattern>
      <pattern id="major" x="675" y="230" width="250" height="250" patternUnits="userSpaceOnUse">
        <path d="M0 .5H250M.5 0V250" stroke="#c8c8c8"/>
      </pattern>
    </defs>
    <g transform="translate(-500 -135)">
      <g class="under"></g>
      <rect x="500" y="135" width="100%" height="100%" fill="url(#dots)"/>
      <rect x="500" y="135" width="100%" height="100%" fill="url(#fine)"/>
      <rect x="500" y="135" width="100%" height="100%" fill="url(#major)"/>
      <g class="walls"></g>
      <g class="items" transform="translate(.5 .5)"></g>
      <g stroke="#008000"><path d="M675.5 930V1031M625 980.5H726"/></g>
      <circle cx="575.5" cy="979.5" r="31" fill="#fff" fill-opacity=".4" stroke="#000"/>
      <path d="M575.5 949L586 1008H565z"/>
      <path d="M573.5 946V936L578 946V936" fill="none" stroke="#000"/>
    </g>
  </svg>
`, (el, root) => {
  root.querySelector(".under").innerHTML = underlay();
  root.querySelector(".walls").innerHTML =
    wall("M825 456V510H995V456M882 456V510M939 456V510") +
    wall("M631 291L775 289V239H850V214H1089V295H993V389H925V422H825V456H1476V956H791L630 797Z");
  root.querySelector(".items").innerHTML = furniture();
});

define("plan-frame", `
  <style>
    :host {
      display: grid;
      grid-template: 26px 1fr 20px / 27px 1fr 21px;
      flex: 1;
      min-width: 0;
      border-right: 4px solid #0b0d0f;
      background: #787d81;
    }
    .top {
      grid-area: 1 / 2 / 2 / 4;
      background:
        linear-gradient(90deg, #fff 1px, transparent 1px) 25px 100% / 50px 11px repeat-x,
        linear-gradient(90deg, #fff 1px, transparent 1px) 5px 100% / 10px 3px repeat-x;
    }
    .left {
      grid-area: 2 / 1 / 4 / 2;
      margin-right: 2px;
      background:
        linear-gradient(#fff 1px, transparent 1px) 100% 45px / 8px 50px repeat-y,
        linear-gradient(#fff 1px, transparent 1px) 100% 5px / 2px 10px repeat-y;
    }
    plan-view { grid-area: 2 / 2 / 3 / 3; }
    .v, .h { display: flex; align-items: center; justify-content: center; background: #efefef; }
    .v { grid-area: 2 / 3 / 4 / 4; padding-bottom: 72px; }
    .h { grid-area: 3 / 2 / 4 / 3; padding-right: 41px; }
    i { border-radius: 2px; background: #868686; }
    .v i { width: 3px; height: 21px; }
    .h i { width: 21px; height: 3px; }
  </style>
  <div class="top"></div>
  <div class="left"></div>
  <plan-view></plan-view>
  <div class="v"><i></i></div>
  <div class="h"><i></i></div>
`);

define("office-app", `
  <style>
    :host { display: flex; flex-direction: column; height: 100vh; }
    main { display: flex; flex: 1; min-height: 0; }
    .rail { flex: none; width: 4px; margin-right: 5px; border-right: 1px solid #07090a; background: #45557c; box-sizing: border-box; }
    room-panel, plan-frame { margin: 5px 0; }
    .right { display: flex; justify-content: end; flex: none; width: 252px; }
    .right button { align-self: start; padding: 2px 9px; border: 0; background: none; }
    .right app-icon { width: 22px; height: 22px; }
  </style>
  <title-bar>【永田町PMO】レイアウト検討.m3da - 3Dオフィスデザイナー11 Professional EX</title-bar>
  <menu-bar items="ファイル(F),編集(E),表示(V),移動/コピー(M),ツール(T),設定(O),ウィンドウ(W),ヘルプ(H)"></menu-bar>
  <tool-bar></tool-bar>
  <main>
    <side-nav></side-nav>
    <div class="rail"></div>
    <room-panel></room-panel>
    <plan-frame></plan-frame>
    <div class="right"><button aria-label="右パネル"><app-icon name="dockRight"></app-icon></button></div>
  </main>
`);
</script>
</body>
</html>
